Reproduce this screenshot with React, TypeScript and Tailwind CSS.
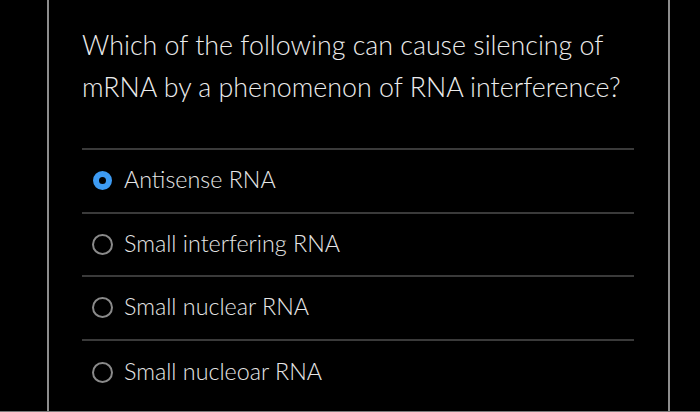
const options = [
  { label: "Antisense RNA", selected: true },
  { label: "Small interfering RNA", selected: false },
  { label: "Small nuclear RNA", selected: false },
  { label: "Small nucleoar RNA", selected: false },
]

const Radio = ({ selected }: { selected: boolean }) => {
  if (selected) {
    return (
      <span className="flex items-center justify-center w-[21px] h-[21px]">
        <span className="w-[19px] h-[19px] rounded-full border-[6px] border-[#3d9bf3] bg-black" />
      </span>
    )
  }
  return <span className="w-[21px] h-[21px] rounded-full border-2 border-[#8a8a8a]" />
}

const App = () => {
  return (
    <div
      className="w-[700px] h-[412px] bg-black border-b border-[#7a7a7a] overflow-hidden"
      style={{ fontFamily: "Lato, 'Open Sans', sans-serif" }}
    >
      <div className="ml-[47px] w-[623px] h-full border-x-2 border-[#8d8d8d] pl-[33px] pr-[34px] pt-[24px]">
        <h1 className="text-[26.8px] leading-[42px] text-[#ececec] font-light">
          Which of the following can cause silencing of mRNA by a phenomenon of RNA interference?
        </h1>
        <div className="mt-[40px] border-t-2 border-[#3a3a3a]">
          {options.map((o) => (
            <div
              key={o.label}
              className="h-[63.5px] flex items-center gap-[11px] pl-[10px] border-b-2 border-[#3a3a3a] last:border-b-0"
            >
              <Radio selected={o.selected} />
              <span className="text-[23.3px] font-light text-[#e6e6e6] -mt-[2px]">{o.label}</span>
            </div>
          ))}
        </div>
      </div>
    </div>
  )
}

export default App
